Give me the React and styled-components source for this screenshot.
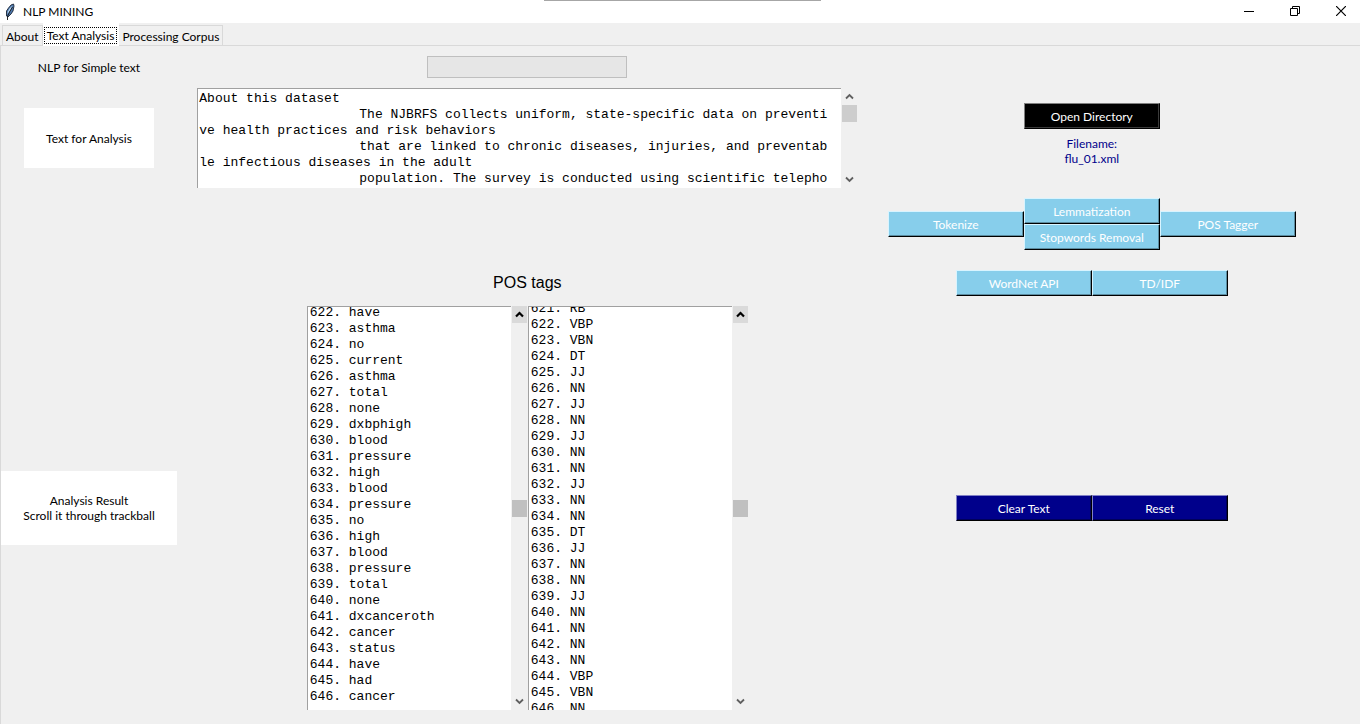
import React, { useEffect, useRef } from "react";
import styled, { createGlobalStyle, css } from "styled-components";

const GlobalStyle = createGlobalStyle`
  *, *::before, *::after { box-sizing: border-box; }
  body {
    margin: 0;
    background: #f0f0f0;
    color: #000;
    font: 12px/15px Lato, "Open Sans", sans-serif;
  }
  button, input, textarea { font: inherit; color: inherit; margin: 0; }
`;

const Window = styled.div`
  min-height: 100vh;
  display: flex;
  flex-direction: column;
`;

const TitleBar = styled.header`
  position: relative;
  height: 23px;
  padding: 0 14px 0 4px;
  display: flex;
  align-items: center;
  background: #fff;
`;

const DragHandle = styled.span`
  position: absolute;
  top: 0;
  left: 40%;
  width: 277px;
  height: 1px;
  background: #a6a6a6;
`;

const Title = styled.h1`
  flex: 1;
  margin: 0 0 0 7px;
  font-size: 12px;
  font-weight: 400;
`;

const WindowControls = styled.div`
  display: flex;
  gap: 36px;
  padding-bottom: 2px;
`;

const PlainButton = styled.button`
  display: flex;
  align-items: center;
  justify-content: center;
  padding: 0;
  border: 0;
  background: none;
`;

const TabList = styled.nav`
  display: flex;
  align-items: flex-end;
  height: 23px;
  padding-left: 2px;
  border-bottom: 1px solid #d9d9d9;
`;

const Tab = styled.button`
  height: 20px;
  padding: 1px 3px 0;
  border: 1px solid #d9d9d9;
  border-bottom: 0;
  border-left-width: ${(p) => (p.$first ? "1px" : "0")};
  background: #f0f0f0;
  white-space: nowrap;
  ${(p) =>
    p.$active &&
    css`
      height: 23px;
      margin-bottom: -1px;
      padding: 2px 1px;
      border-color: #fff;
      background: #fff;
    `}
`;

const FocusRing = styled.span`
  display: block;
  padding: 0 2px;
  border: 1px dotted #000;
`;

const Panel = styled.main`
  flex: 1;
  display: grid;
  grid-template-columns: 176px minmax(0, 700fr) minmax(408px, 428fr) minmax(0, 54fr);
  grid-template-rows: 42px 100px 72px 46px auto;
  align-content: start;
  align-items: center;
  justify-items: center;
  border-left: 1px solid #d9d9d9;
`;

const Cell = styled.div`
  grid-column: ${(p) => p.$col};
  grid-row: ${(p) => p.$row};
  display: flex;
  justify-content: center;
  width: 100%;
`;

const Caption = styled.label`
  text-align: center;
`;

const CardCaption = styled.label`
  display: flex;
  align-items: center;
  justify-content: center;
  text-align: center;
  white-space: pre-line;
  background: #fff;
  width: ${(p) => (p.$wide ? "100%" : "130px")};
  height: ${(p) => (p.$wide ? "74px" : "60px")};
`;

const Heading = styled.h2`
  margin: 0;
  font: 400 16px/20px "Liberation Sans", Arial, sans-serif;
`;

const Entry = styled.input`
  width: 200px;
  height: 22px;
  border: 1px solid #bfbfbf;
  background: #e6e6e6;
`;

const ScrollFrame = styled.div`
  display: grid;
  grid-template-columns: minmax(0, 1fr) 15px;
  column-gap: 1px;
  width: ${(p) => p.$width};
  max-width: 100%;
  height: ${(p) => p.$height};
`;

const TextBox = styled.textarea`
  width: 100%;
  height: 100%;
  padding: ${(p) => (p.$inset ? "2px 1px 0" : "0 2px 16px")};
  border: 0 solid #a0a0a0;
  border-width: 1px 0 0 1px;
  border-radius: 0;
  outline: 0;
  resize: none;
  overflow: hidden;
  background: #fff;
  font: 13px/16px "Liberation Mono", "Courier New", monospace;
  white-space: pre;
  tab-size: 160px;
`;

const ScrollBar = styled.div`
  display: flex;
  flex-direction: column;
`;

const ScrollArrow = styled(PlainButton)`
  height: 17px;
  color: ${(p) => (p.$hot ? "#000" : "#606060")};
  background: ${(p) => (p.$hot ? "#dadada" : "#f0f0f0")};
`;

const Track = styled.div`
  flex: 1;
  display: flex;
  flex-direction: column;
  justify-content: ${(p) => (p.$middle ? "center" : "flex-start")};
`;

const Thumb = styled.div`
  height: 17px;
  background: ${(p) => (p.$middle ? "#c0c0c0" : "#cdcdcd")};
`;

const tones = {
  sky: css`
    color: #fff;
    background: #87ceeb;
    border-color: #d8f4ff #000 #000 #d8f4ff;
    box-shadow: inset -1px -1px #5c8ca0;
  `,
  black: css`
    color: #fff;
    background: #000;
    border-color: #7f7f7f #000 #000 #7f7f7f;
    box-shadow: inset -1px -1px #3a3a3a;
  `,
  navy: css`
    color: #fff;
    background: #00008b;
    border-color: #8080c5 #000 #000 #8080c5;
    box-shadow: inset -1px -1px #00005a;
  `,
};

const ActionButton = styled.button`
  width: 136px;
  height: 26px;
  padding: 0;
  border: 1px solid;
  ${(p) => tones[p.$tone]}
`;

const ButtonRow = styled.div`
  display: flex;
  align-items: center;
`;

const ButtonStack = styled.div`
  display: flex;
  flex-direction: column;
`;

const ListPair = styled.div`
  display: flex;
  gap: 1px;
`;

const FilePicker = styled.div`
  display: flex;
  flex-direction: column;
  align-items: center;
  gap: 7px;
  padding-bottom: 8px;
`;

const FileCell = styled(Cell)`
  align-self: end;
  padding-bottom: 14px;
`;

const FileName = styled.output`
  text-align: center;
  white-space: pre-line;
  color: #00008b;
`;

const Feather = () => (
  <svg width="12" height="18" viewBox="0 0 12 18" aria-hidden="true">
    <path d="M7 2 L9.5 1 L10 3 L9 8 L7 11 L4 14 L2.5 13 L2.5 8 L4.500 5 Z" fill="#4d78ad" stroke="#1b2638" strokeWidth="0.9" />
    <path d="M8.500 2.500 L5.500 5.500 L3.600 9 L3.600 11 L6 8 Z" fill="#b4d2ee" />
    <path d="M8.500 4 L5.500 9 L3.500 13.500 L3.500 17" fill="none" stroke="#111" strokeWidth="0.9" />
  </svg>
);

const Arrow = ({ down, bold }) => (
  <svg width="9" height="7" viewBox="0 0 9 7" aria-hidden="true">
    <path
      d={down ? "M1 1.5 L4.5 5 L8 1.5" : "M1 5.5 L4.5 2 L8 5.5"}
      fill="none"
      stroke="currentColor"
      strokeWidth={bold ? 2.2 : 1.8}
    />
  </svg>
);

function ScrolledText({ id, label, text, width, height, scroll = 0, inset, middle }) {
  const box = useRef(null);
  useEffect(() => {
    box.current.scrollTop = scroll;
  }, [scroll]);
  return (
    <ScrollFrame $width={width} $height={height}>
      <TextBox ref={box} id={id} aria-label={label} $inset={inset} defaultValue={text} spellCheck={false} />
      <ScrollBar>
        <ScrollArrow type="button" aria-label="Scroll up" $hot={middle}>
          <Arrow bold={middle} />
        </ScrollArrow>
        <Track $middle={middle}>
          <Thumb $middle={middle} />
        </Track>
        <ScrollArrow type="button" aria-label="Scroll down">
          <Arrow down />
        </ScrollArrow>
      </ScrollBar>
    </ScrollFrame>
  );
}

const sourceText = [
  "About this dataset",
  "\tThe NJBRFS collects uniform, state-specific data on preventi",
  "ve health practices and risk behaviors",
  "\tthat are linked to chronic diseases, injuries, and preventab",
  "le infectious diseases in the adult",
  "\tpopulation. The survey is conducted using scientific telepho",
].join("\n");

const number = (start, words) =>
  words
    .split(" ")
    .map((word, i) => `${start + i}. ${word}`)
    .join("\n");

const tokens = number(
  622,
  "have asthma no current asthma total none dxbphigh blood pressure high blood pressure no high blood pressure total none dxcanceroth cancer status have had cancer"
);

const tags = number(
  621,
  "RB VBP VBN DT JJ NN JJ NN JJ NN NN JJ NN NN DT JJ NN NN JJ NN NN NN NN VBP VBN NN"
);

export default function App() {
  return (
    <Window>
      <GlobalStyle />
      <TitleBar>
        <DragHandle />
        <Feather />
        <Title>NLP MINING</Title>
        <WindowControls>
          <PlainButton type="button" aria-label="Minimize">
            <svg width="10" height="10" viewBox="0 0 10 10">
              <path d="M0 5.5H10" stroke="#000" />
            </svg>
          </PlainButton>
          <PlainButton type="button" aria-label="Restore">
            <svg width="10" height="10" viewBox="0 0 10 10">
              <path d="M.5 2.5H7.5V9.5H.5ZM2.5 2.5V.5H9.5V7.5H7.5" fill="none" stroke="#000" />
            </svg>
          </PlainButton>
          <PlainButton type="button" aria-label="Close">
            <svg width="10" height="10" viewBox="0 0 10 10">
              <path d="M0 0L10 10M10 0L0 10" stroke="#000" strokeWidth="1.2" />
            </svg>
          </PlainButton>
        </WindowControls>
      </TitleBar>

      <TabList>
        <Tab type="button" $first>About</Tab>
        <Tab type="button" $active>
          <FocusRing>Text Analysis</FocusRing>
        </Tab>
        <Tab type="button">Processing Corpus</Tab>
      </TabList>

      <Panel>
        <Cell $col={1} $row={1}>
          <Caption htmlFor="simple">NLP for Simple text</Caption>
        </Cell>
        <Cell $col={2} $row={1}>
          <Entry id="simple" type="text" />
        </Cell>

        <Cell $col={1} $row={2}>
          <CardCaption htmlFor="source">Text for Analysis</CardCaption>
        </Cell>
        <Cell $col={2} $row={2}>
          <ScrolledText id="source" text={sourceText} width="660px" height="100px" inset />
        </Cell>
        <FileCell $col={3} $row={2}>
          <FilePicker>
            <ActionButton type="button" $tone="black">Open Directory</ActionButton>
            <FileName>{"Filename:\nflu_01.xml"}</FileName>
          </FilePicker>
        </FileCell>

        <Cell $col={3} $row={3}>
          <ButtonRow>
            <ActionButton type="button" $tone="sky">Tokenize</ActionButton>
            <ButtonStack>
              <ActionButton type="button" $tone="sky">Lemmatization</ActionButton>
              <ActionButton type="button" $tone="sky">Stopwords Removal</ActionButton>
            </ButtonStack>
            <ActionButton type="button" $tone="sky">POS Tagger</ActionButton>
          </ButtonRow>
        </Cell>

        <Cell $col={2} $row={4}>
          <Heading>POS tags</Heading>
        </Cell>
        <Cell $col={3} $row={4}>
          <ButtonRow>
            <ActionButton type="button" $tone="sky">WordNet API</ActionButton>
            <ActionButton type="button" $tone="sky">TD/IDF</ActionButton>
          </ButtonRow>
        </Cell>

        <Cell $col={1} $row={5}>
          <CardCaption htmlFor="tokens" $wide>{"Analysis Result\nScroll it through trackball"}</CardCaption>
        </Cell>
        <Cell $col={2} $row={5}>
          <ListPair>
            <ScrolledText id="tokens" text={tokens} width="220px" height="404px" scroll={2} middle />
            <ScrolledText label="POS tags" text={tags} width="220px" height="404px" scroll={6} middle />
          </ListPair>
        </Cell>
        <Cell $col={3} $row={5}>
          <ButtonRow>
            <ActionButton type="button" $tone="navy">Clear Text</ActionButton>
            <ActionButton type="button" $tone="navy">Reset</ActionButton>
          </ButtonRow>
        </Cell>
      </Panel>
    </Window>
  );
}
